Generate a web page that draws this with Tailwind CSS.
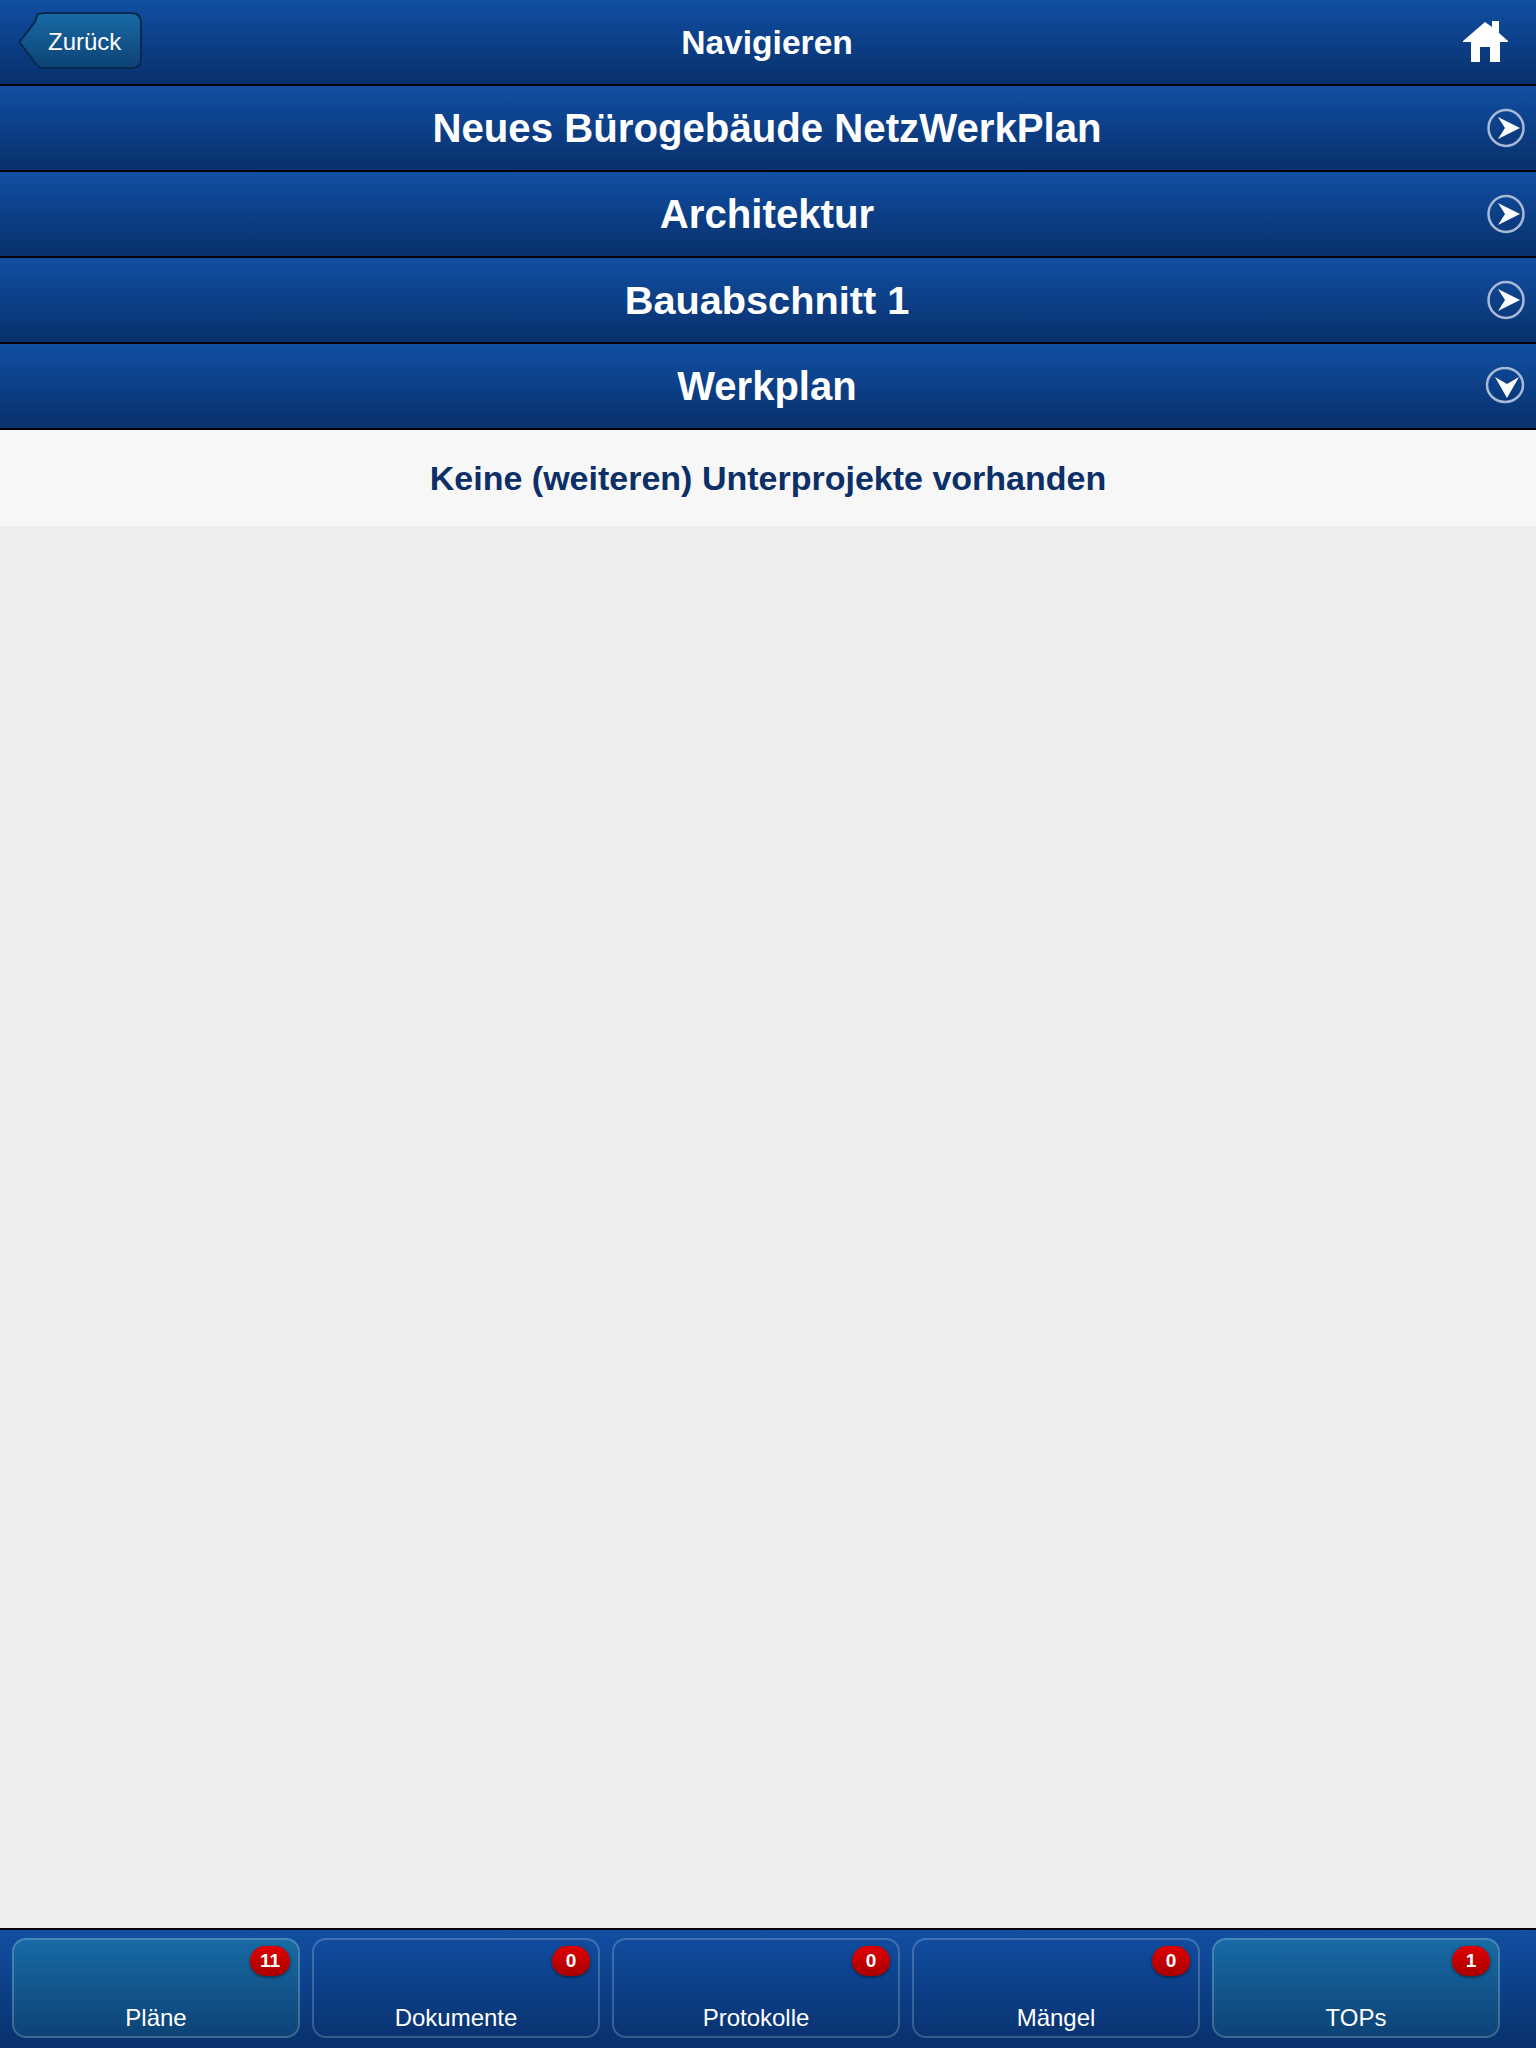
<!DOCTYPE html>
<html lang="de">
<head>
  <meta charset="UTF-8" />
  <title>Navigieren</title>
  <script src="https://cdn.jsdelivr.net/npm/@tailwindcss/browser@4"></script>
</head>
<body class="h-[2048px] flex flex-col bg-[#eeeeee] text-white font-['Liberation_Sans',Arial,sans-serif]">

  <!-- header -->
  <header class="relative h-[86px] shrink-0 flex items-center justify-center border-b-2 border-black bg-gradient-to-b from-[#114fa3] to-[#08306c]">
    <a class="absolute left-[19px] top-[12px] w-[124px] h-[58px] flex items-center pl-[29px] pt-[2px] text-[24px]">
      <svg class="absolute inset-0" width="124" height="58" viewBox="0 0 124 58">
        <defs>
          <linearGradient id="back" x1="0" y1="0" x2="0" y2="1">
            <stop offset="0" stop-color="#186ba6" />
            <stop offset="1" stop-color="#0d4275" />
          </linearGradient>
        </defs>
        <path d="M18 3Q20 1 26 1H112Q122 1 122 11V47Q122 56 112 56H26Q20 56 17 52L1 31Q0 30 1 29L16 10Q17 8 18 3Z" fill="url(#back)" stroke="#08294f" stroke-width="2" />
      </svg>
      <span class="relative">Zurück</span>
    </a>
    <h1 class="pr-[2px] pt-[2px] text-[33.6px] font-bold">Navigieren</h1>
    <svg class="absolute left-[1463px] top-[20px]" width="45" height="42" viewBox="0 0 45 42" fill="#fff">
      <path d="M22 2 0 21V22H8V42H17V27H27V42H37V22H45V21L36 13V1H29V7Z" />
    </svg>
  </header>

  <!-- breadcrumb rows -->
  <div class="relative h-[86px] shrink-0 flex items-center justify-center border-b-2 border-black bg-gradient-to-b from-[#114fa3] to-[#08306c]">
    <h2 class="pr-[2px] pt-[2px] text-[40.2px] font-bold">Neues Bürogebäude NetzWerkPlan</h2>
    <svg class="absolute left-[1487px] top-[22px]" width="38" height="40" viewBox="0 0 38 40" fill="none">
      <ellipse cx="19" cy="20" rx="17.500" ry="18" stroke="#a9bad6" stroke-width="2.500" />
      <path d="M11 9 33 20 11 31 18 20Z" fill="#fff" />
    </svg>
  </div>
  <div class="relative h-[86px] shrink-0 flex items-center justify-center border-b-2 border-black bg-gradient-to-b from-[#114fa3] to-[#08306c]">
    <h2 class="pr-[2px] pt-[2px] text-[40.2px] font-bold">Architektur</h2>
    <svg class="absolute left-[1487px] top-[22px]" width="38" height="40" viewBox="0 0 38 40" fill="none">
      <ellipse cx="19" cy="20" rx="17.500" ry="18" stroke="#a9bad6" stroke-width="2.500" />
      <path d="M11 9 33 20 11 31 18 20Z" fill="#fff" />
    </svg>
  </div>
  <div class="relative h-[86px] shrink-0 flex items-center justify-center border-b-2 border-black bg-gradient-to-b from-[#114fa3] to-[#08306c]">
    <h2 class="pr-[2px] pt-[1px] text-[39.7px] font-bold">Bauabschnitt 1</h2>
    <svg class="absolute left-[1487px] top-[22px]" width="38" height="40" viewBox="0 0 38 40" fill="none">
      <ellipse cx="19" cy="20" rx="17.500" ry="18" stroke="#a9bad6" stroke-width="2.500" />
      <path d="M11 9 33 20 11 31 18 20Z" fill="#fff" />
    </svg>
  </div>
  <div class="relative h-[86px] shrink-0 flex items-center justify-center border-b-2 border-black bg-gradient-to-b from-[#114fa3] to-[#08306c]">
    <h2 class="pr-[2px] text-[40px] font-bold">Werkplan</h2>
    <svg class="absolute left-[1485px] top-[23px]" width="40" height="38" viewBox="0 0 40 38" fill="none">
      <ellipse cx="20" cy="18" rx="18" ry="17" stroke="#a9bad6" stroke-width="2.500" />
      <path d="M10 10 22 17 34 10 22 31Z" fill="#fff" />
    </svg>
  </div>

  <div class="h-[96px] shrink-0 flex items-center justify-center bg-[#f7f7f7] text-[#0b2f66] text-[34px] font-bold">
    Keine (weiteren) Unterprojekte vorhanden
  </div>

  <main class="grow"></main>

  <!-- footer tabs -->
  <footer class="h-[120px] shrink-0 flex gap-[12px] pl-[12px] pt-[8px] border-t-2 border-black bg-gradient-to-b from-[#114fa3] to-[#08306c]">
    <a class="relative w-[288px] h-[100px] flex items-end justify-center rounded-[14px] border-2 border-white/20 bg-gradient-to-b from-[#186ba6] to-[#0d4275] bg-origin-border text-[24px]">
      Pläne
      <span class="absolute right-[8px] top-[6px] w-[40px] h-[30px] flex items-center justify-center rounded-full bg-gradient-to-b from-[#e00000] to-[#a80000] shadow-[0_1px_3px_rgba(0,0,0,0.6)] text-[19px] font-bold">11</span>
    </a>
    <a class="relative w-[288px] h-[100px] flex items-end justify-center rounded-[14px] border-2 border-white/20 text-[24px]">
      Dokumente
      <span class="absolute right-[8px] top-[6px] w-[38px] h-[30px] flex items-center justify-center rounded-full bg-gradient-to-b from-[#e00000] to-[#a80000] shadow-[0_1px_3px_rgba(0,0,0,0.6)] text-[19px] font-bold">0</span>
    </a>
    <a class="relative w-[288px] h-[100px] flex items-end justify-center rounded-[14px] border-2 border-white/20 text-[24px]">
      Protokolle
      <span class="absolute right-[8px] top-[6px] w-[38px] h-[30px] flex items-center justify-center rounded-full bg-gradient-to-b from-[#e00000] to-[#a80000] shadow-[0_1px_3px_rgba(0,0,0,0.6)] text-[19px] font-bold">0</span>
    </a>
    <a class="relative w-[288px] h-[100px] flex items-end justify-center rounded-[14px] border-2 border-white/20 text-[24px]">
      Mängel
      <span class="absolute right-[8px] top-[6px] w-[38px] h-[30px] flex items-center justify-center rounded-full bg-gradient-to-b from-[#e00000] to-[#a80000] shadow-[0_1px_3px_rgba(0,0,0,0.6)] text-[19px] font-bold">0</span>
    </a>
    <a class="relative w-[288px] h-[100px] flex items-end justify-center rounded-[14px] border-2 border-white/20 bg-gradient-to-b from-[#186ba6] to-[#0d4275] bg-origin-border text-[24px]">
      TOPs
      <span class="absolute right-[8px] top-[6px] w-[38px] h-[30px] flex items-center justify-center rounded-full bg-gradient-to-b from-[#e00000] to-[#a80000] shadow-[0_1px_3px_rgba(0,0,0,0.6)] text-[19px] font-bold">1</span>
    </a>
  </footer>
</body>
</html>
